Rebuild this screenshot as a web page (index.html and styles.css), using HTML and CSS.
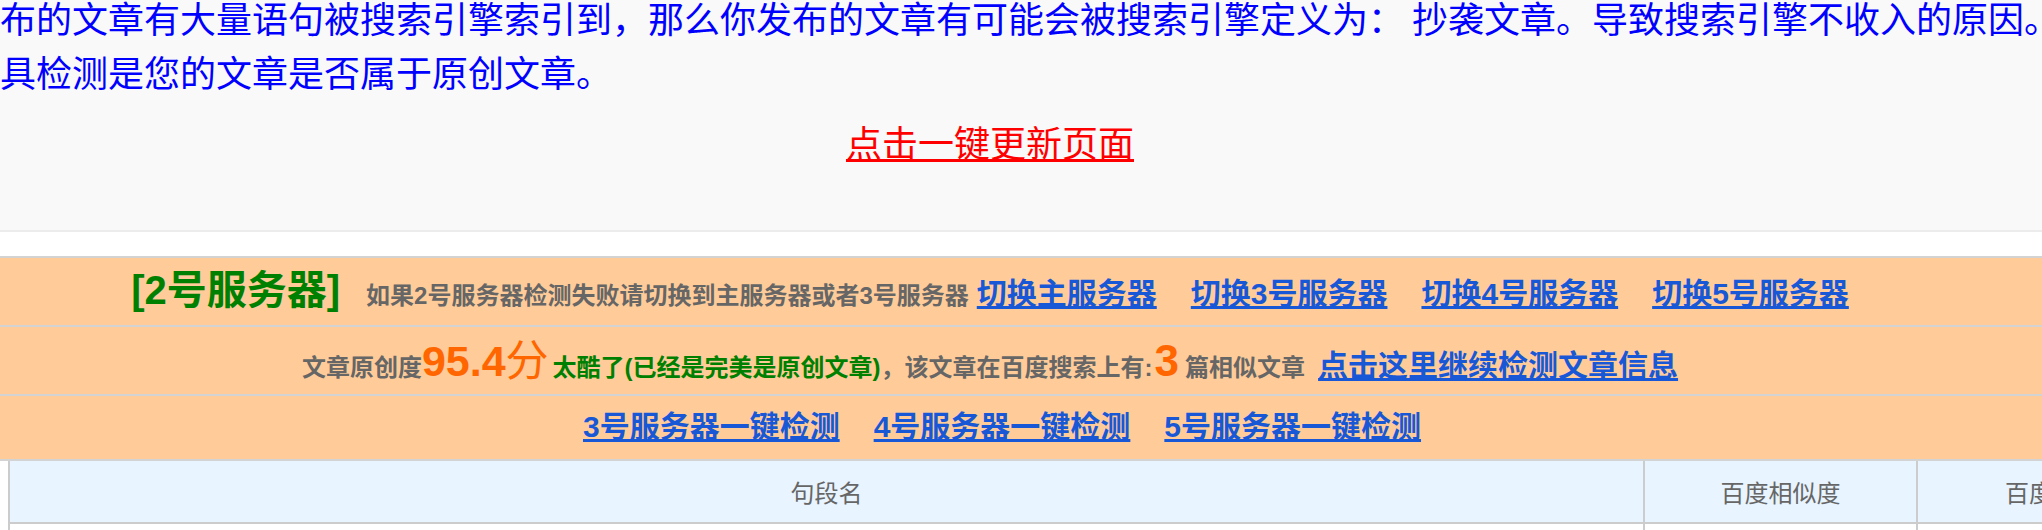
FILE: index.html
```html
<!DOCTYPE html>
<html lang="zh-CN">
<head>
<meta charset="utf-8">
<title>文章原创度检测</title>
<link rel="stylesheet" href="styles.css">
</head>
<body>
<div class="page">
  <section class="intro">
    <p class="intro-text">布的文章有大量语句被搜索引擎索引到，那么你发布的文章有可能会被搜索引擎定义为： 抄袭文章。导致搜索引擎不收入的原因。<br>具检测是您的文章是否属于原创文章。</p>
    <p class="refresh"><a href="#">点击一键更新页面</a></p>
  </section>
  <div class="spacer"></div>
  <div class="bar bar-first">
    <span class="server-name">[2号服务器]</span>
    <span class="hint hint-server">如果2号服务器检测失败请切换到主服务器或者3号服务器</span>
    <a class="link link-tight" href="#">切换主服务器</a>
    <a class="link" href="#">切换3号服务器</a>
    <a class="link" href="#">切换4号服务器</a>
    <a class="link" href="#">切换5号服务器</a>
  </div>
  <div class="bar">
    <span class="hint">文章原创度</span>
    <span class="score">95.4<span class="score-unit">分</span></span>
    <span class="verdict">太酷了(已经是完美是原创文章)</span>
    <span class="hint">，该文章在百度搜索上有:</span>
    <span class="count">3</span>
    <span class="hint hint-similar">篇相似文章</span>
    <a class="link link-info" href="#">点击这里继续检测文章信息</a>
  </div>
  <div class="bar bar-last">
    <a class="link link-lead" href="#">3号服务器一键检测</a>
    <a class="link" href="#">4号服务器一键检测</a>
    <a class="link" href="#">5号服务器一键检测</a>
  </div>
  <table class="result">
    <colgroup>
      <col class="col-name">
      <col class="col-sim">
      <col class="col-more">
    </colgroup>
    <thead>
      <tr>
        <th>句段名</th>
        <th>百度相似度</th>
        <th>百度搜索结果</th>
      </tr>
    </thead>
    <tbody>
      <tr>
        <td></td>
        <td></td>
        <td></td>
      </tr>
    </tbody>
  </table>
</div>
</body>
</html>
```

FILE: styles.css
```css
html, body {
  margin: 0;
  padding: 0;
  overflow: hidden;
  background: #ffffff;
}

body {
  font-family: "Liberation Sans", "Noto Sans CJK SC", sans-serif;
}

.page {
  width: 2042px;
}

.intro {
  height: 230px;
  background: #f9f9f9;
  border-bottom: 2px solid #ececec;
  overflow: hidden;
}

.intro-text {
  margin: -10px 0 0 0;
  font-family: "Noto Sans CJK SC", sans-serif;
  font-size: 36px;
  line-height: 54px;
  color: #0000ff;
  white-space: nowrap;
}

.refresh {
  margin: 16px 0 0 0;
  padding-right: 62px;
  text-align: center;
  font-family: "Noto Sans CJK SC", sans-serif;
  font-size: 36px;
  line-height: 54px;
}

.refresh a {
  color: #ff0000;
  text-decoration: underline;
  text-decoration-thickness: 3px;
}

.spacer {
  height: 24px;
  background: #ffffff;
}

.bar {
  display: flex;
  justify-content: center;
  align-items: baseline;
  height: 55px;
  padding: 12px 62px 0 0;
  background: #ffcc99;
  border-bottom: 2px solid #d3d3d3;
  white-space: nowrap;
}

.bar > * {
  line-height: 1;
}

.bar-first {
  border-top: 2px solid #d3d3d3;
}

.bar-last {
  height: 47px;
  padding-top: 16px;
}

.server-name {
  font-size: 40px;
  font-weight: bold;
  color: #008000;
  margin-right: 26px;
}

.hint {
  font-size: 24px;
  font-weight: bold;
  color: #666666;
}

.hint-server {
  margin-right: 8px;
}

.hint-similar {
  margin: 0 13px 0 6px;
}

.link {
  font-size: 30px;
  font-weight: bold;
  color: #1858d6;
  text-decoration: underline;
  text-decoration-thickness: 3px;
  margin-left: 34px;
}

.link-tight,
.link-info {
  margin-left: 0;
}

.link-lead {
  margin-left: 24px;
}

.score {
  font-size: 43px;
  font-weight: bold;
  color: #ff6600;
}

.score-unit {
  font-weight: normal;
}

.verdict {
  font-size: 24px;
  font-weight: bold;
  color: #008000;
  margin-left: 4px;
}

.count {
  font-size: 44px;
  font-weight: bold;
  color: #ff6600;
  margin-left: 2px;
}

.result {
  margin-left: 8px;
  width: 2228px;
  border-collapse: collapse;
  table-layout: fixed;
}

.col-name {
  width: 1635px;
}

.col-sim {
  width: 273px;
}

.col-more {
  width: 320px;
}

.result th {
  height: 61px;
  padding: 0;
  background: #e8f4ff;
  border: 2px solid #cccccc;
  border-top: none;
  color: #666666;
  font-family: "Noto Sans CJK SC", sans-serif;
  font-size: 24px;
  font-weight: normal;
  text-align: center;
  vertical-align: middle;
}

.result td {
  height: 40px;
  padding: 0;
  border: 2px solid #cccccc;
  border-top: none;
  background: #ffffff;
}
```
